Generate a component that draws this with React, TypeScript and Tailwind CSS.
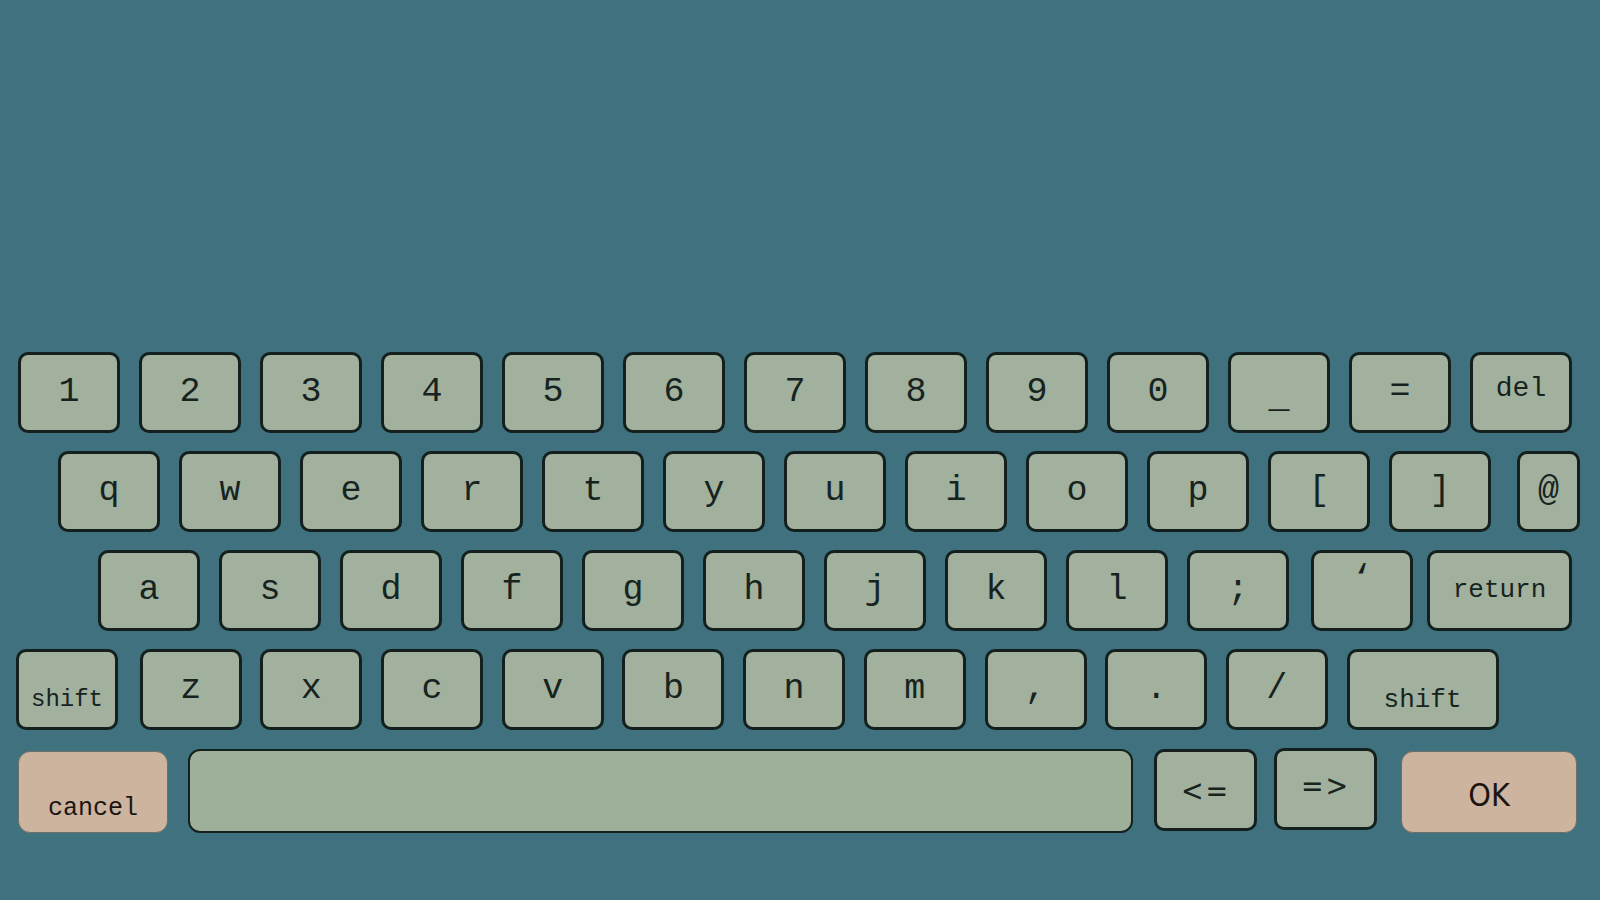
import React from "react";

type KeyProps = {
  label: string;
  className?: string;
  textClass?: string;
};

const mono = "font-['Liberation_Mono','DejaVu_Sans_Mono',monospace]";

// single keycap, sage fill with a dark outline
const Key = ({ label, className = "w-[102px]", textClass = "text-[35px]" }: KeyProps) => (
  <button
    className={`${className} h-[81px] shrink-0 rounded-[10px] border-[3px] border-[#13201d] bg-[#a1b19d] text-[#17231f] flex items-center justify-center ${mono}`}
  >
    <span className={textClass}>{label}</span>
  </button>
);

const row1 = ["1", "2", "3", "4", "5", "6", "7", "8", "9", "0"];
const row2 = ["q", "w", "e", "r", "t", "y", "u", "i", "o", "p", "[", "]"];
const row3 = ["a", "s", "d", "f", "g", "h", "j", "k", "l", ";"];
const row4 = ["z", "x", "c", "v", "b", "n", "m", ",", ".", "/"];

export default function App() {
  return (
    <div className="w-[1600px] h-[900px] bg-[#40717f] overflow-hidden pt-[352px]">
      <div className="flex flex-col gap-[18px]">
        {/* numbers */}
        <div className="flex gap-[19px] pl-[18px]">
          {row1.map((k) => (
            <Key key={k} label={k} />
          ))}
          <Key label="_" textClass="text-[35px] translate-y-[6px]" />
          <Key label="=" />
          <Key label="del" textClass="text-[28px] -translate-y-[4px]" />
        </div>

        {/* top letters */}
        <div className="flex gap-[19px] pl-[58px]">
          {row2.map((k) => (
            <Key key={k} label={k} />
          ))}
          <Key label="@" className="w-[63px] ml-[7px]" />
        </div>

        {/* home row */}
        <div className="flex gap-[19px] pl-[98px]">
          {row3.map((k) => (
            <Key key={k} label={k} />
          ))}
          <Key label={"\u2018"} className="w-[102px] ml-[3px]" textClass="text-[35px] -translate-y-[10px]" />
          <Key label="return" className="w-[145px] -ml-[5px]" textClass="text-[26px]" />
        </div>

        {/* bottom letters */}
        <div className="flex gap-[18.7px] pl-[16px]">
          <button
            className={`w-[102px] h-[81px] shrink-0 rounded-[10px] border-[3px] border-[#13201d] bg-[#a1b19d] text-[#17231f] flex items-end justify-center pb-[9px] ${mono}`}
          >
            <span className="text-[24px]">shift</span>
          </button>
          <div className="flex gap-[18.7px] ml-[3px]">
            {row4.map((k) => (
              <Key key={k} label={k} />
            ))}
          </div>
          <button
            className={`w-[152px] h-[81px] shrink-0 rounded-[10px] border-[3px] border-[#13201d] bg-[#a1b19d] text-[#17231f] flex items-end justify-center pb-[7px] ${mono}`}
          >
            <span className="text-[26px]">shift</span>
          </button>
        </div>

        {/* actions */}
        <div className="flex items-start pl-[18px] mt-[1px]">
          <button
            className={`w-[150px] h-[82px] mt-[2px] shrink-0 rounded-[12px] border-[1.5px] border-[#6f6f6a] bg-[#cdb49e] text-[#1b1512] flex items-end justify-center pb-[5px] ${mono}`}
          >
            <span className="text-[25px]">cancel</span>
          </button>
          <div className="w-[945px] h-[84px] ml-[20px] shrink-0 rounded-[12px] border-[2px] border-[#13201d] bg-[#9fb09a]" />
          <button className="w-[103px] h-[82px] ml-[21px] shrink-0 rounded-[10px] border-[3px] border-[#13201d] bg-[#a1b19d] text-[#17231f] flex items-center justify-center font-['DejaVu_Sans_Condensed','DejaVu_Sans',sans-serif]">
            <span className="text-[30px] tracking-[2px]">{"<="}</span>
          </button>
          <button className="w-[103px] h-[82px] ml-[17px] -mt-[1px] shrink-0 rounded-[10px] border-[3px] border-[#13201d] bg-[#a1b19d] text-[#17231f] flex items-center justify-center font-['DejaVu_Sans_Condensed','DejaVu_Sans',sans-serif]">
            <span className="text-[30px] tracking-[2px] -translate-y-[4px]">{"=>"}</span>
          </button>
          <button className="w-[176px] h-[82px] ml-[24px] mt-[2px] shrink-0 rounded-[12px] border-[1.5px] border-[#6f6f6a] bg-[#cdb49e] text-[#1b1512] flex items-center justify-center font-['DejaVu_Sans_Condensed','DejaVu_Sans',sans-serif]">
            <span className="text-[32px] translate-y-[3px]">OK</span>
          </button>
        </div>
      </div>
    </div>
  );
}
